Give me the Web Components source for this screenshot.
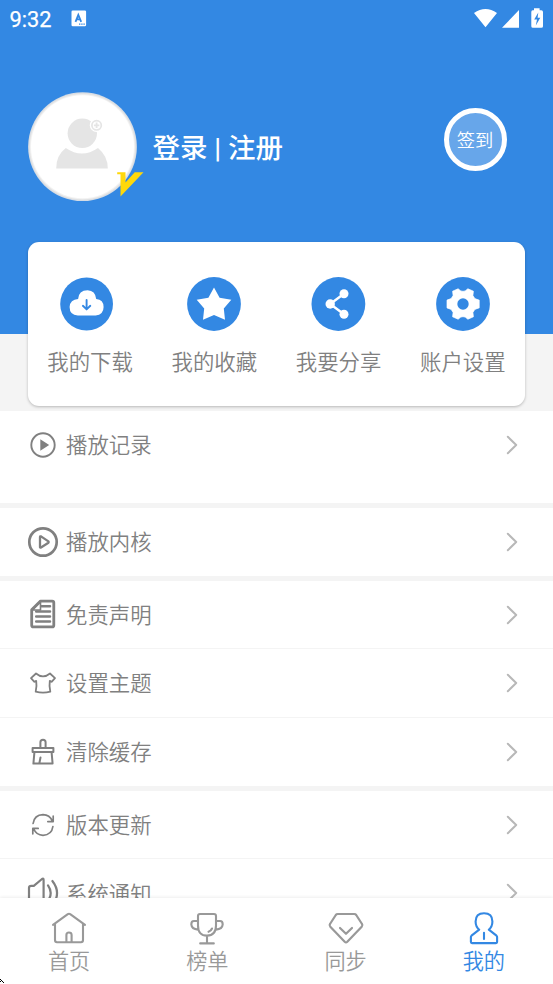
<!DOCTYPE html>
<html lang="zh-CN">
<head>
<meta charset="utf-8">
<title>我的</title>
<style>
html,body{margin:0;height:100%;overflow:hidden}
body{--blue:#3388e3;--gray:#808080;--line:#f4f4f4;font-family:"Noto Sans CJK SC",sans-serif;font-weight:350;color:var(--gray);background:#fff}
</style>
</head>
<body>
<profile-page></profile-page>
<script>
const ICONS = {
 play:`<circle r="11.7" stroke-width="1.9"/><path d="M-2.7-5.8V5.8L6.2 0Z" fill="currentColor" stroke="none"/>`,
 core:`<circle r="13.7" stroke-width="2.7"/><path d="M-3-5V5.2Q-2.8 6-2 5.5L5.4.7Q6 0 5.4-.6L-2-5.6Q-2.8-6-3-5Z" stroke-width="2.3"/>`,
 doc:`<path d="M-2.5-13.9H9.2Q10.8-13.9 10.8-12.3V10.2Q10.8 11.9 9.2 11.9H-9.6Q-11.3 11.9-11.3 10.2V-5.2Z" stroke-width="2.8"/><path d="M-2.5-13V-5H-10.5Z" stroke-width="1.6"/><path d="M-1.5-8.7H7M-6.8-3.6H7M-6.8 1.5H7M-6.8 6.5H7" stroke-width="2.5"/>`,
 shirt:`<path d="M-7-9.5-12-4.9-8.6-1.2-6.8-2.1Q-6 3-7.3 8.6Q0 10.6 7.3 8.6Q6 3 6.8-2.1L8.6-1.2 12-4.9 7-9.5Q0-3.7-7-9.5Z" stroke-width="1.8"/>`,
 brush:`<path d="M-2.6-4V-9.7Q-2.6-12.2 0-12.2T2.6-9.7V-4M-10.4-4H10.4V0H-10.4ZM-8.6.3-9.6 11.6H9.6L8.6.3M-2.5 5.5-3.7 11.5" stroke-width="2"/>`,
 refresh:`<path d="M-9.9-1.5Q-8.7-10 0-10.3Q6.8-10 9.2-4M10.2-8.8V-3.4H4.8M9.9 1.5Q8.7 10 0 10.3Q-6.8 10-9.2 4M-10.2 8.8V3.4H-4.8" stroke-width="1.7"/>`,
 speaker:`<path d="M-14 6V-5.2Q-14-7.2-11.7-7.2H-9.2L-1-14Q.6-15 .6-13V13Q.6 15-1 14L-9.2 7.4H-12.5Q-14 7.4-14 6M5-7.6Q10.4 0 5 7.6M9.4-12Q18.7 0 9.4 12" stroke-width="2.2"/>`,
 home:`<path d="M-16-3.2 -1.2-13.9Q0-14.7 1.2-13.9L16-3.2M-14-4.3V12Q-14 14.2-12 14.2H12Q14 14.2 14 12V-4.3M-2.6 14V7Q-2.6 4.5 0 4.5T2.6 7V14" stroke-width="2.1"/>`,
 trophy:`<path d="M-7-14H7Q9-14 9-12V-2.5Q9 7.6 0 7.6T-9-2.5V-12Q-9-14-7-14M-9.5-7H-13Q-15.7-7-15.7-3.6Q-15.3 1.2-9 1.6M9.5-7H13Q15.7-7 15.7-3.6Q15.3 1.2 9 1.6M0 8V15.5M-6.8 15.4H6.8M1.5 3.8Q4 3 5 .5" stroke-width="2.1"/>`,
 gem:`<path d="M-8.3-14H8.3Q9.5-14 10.2-13L16-4Q17-2.6 15.7-1.2L1.3 13.7Q0 14.9-1.3 13.7L-15.7-1.2Q-17-2.6-16-4L-10.2-13Q-9.5-14-8.3-14ZM-6 0 0 5.8 6 0" stroke-width="2.2"/>`,
 person:`<path d="M-4.8 1.7Q-8.4-1.4-8.4-6.5Q-8.4-14.8 0-14.8T8.4-6.5Q8.4-1.4 4.8 1.7L12.5 7.7Q13.1 8.2 13.1 9V14Q13.1 15.1 12 15.1H-12Q-13.1 15.1-13.1 14V9Q-13.1 8.2-12.5 7.7ZM0 4.8V11" stroke-width="2.1"/>`,
 arrow:`<path d="M-4.2-8.2 4.2 0-4.2 8.2" stroke-width="2"/>`,
 cloud:`<g transform="translate(-3.4 0)"><circle r="26.4" fill="var(--blue)" stroke="none"/><path d="M-8.8 11.5Q-17 11-17 3Q-16.5-4.6-8.5-5Q-8-13.5 1-13.7Q8.7-13.4 9.6-5Q17-4.3 17 3Q17 10.8 9 11.5Z" fill="#fff" stroke="none"/><path d="M0-4V4.5M-3.7 1.8 0 5.4 3.7 1.8" stroke="var(--blue)" stroke-width="1.9"/></g>`,
 star:`<circle r="26.9" fill="var(--blue)" stroke="none"/><path d="M0-16.5 5.6-6.2 17.3-4.2 9.8 4.4 11 15.8 0 11 -11 15.8-9.8 4.4-17.3-4.2-5.6-6.2Z" fill="#fff" stroke="none"/>`,
 share:`<g transform="translate(-.6 0)"><circle r="26.9" fill="var(--blue)" stroke="none"/><g fill="#fff" stroke="none"><circle cx="-8.2" r="4.7"/><circle cx="5.6" cy="-10.2" r="4.5"/><circle cx="5.6" cy="10.2" r="4.5"/></g><path d="M5.6-10.2-8.2 0 5.6 10.2" stroke="#fff" stroke-width="2.4"/></g>`,
 gear:`<circle r="26.9" fill="var(--blue)" stroke="none"/><path d="M16-3.9 11.8-5.4 9.9-8.6 10.4-12.8 4.9-15.2 2.2-13.1Q0-12.2-2.2-13.1L-4.9-15.2-10.4-12.8-9.9-8.6-11.8-5.4-16-3.9V3.9L-11.8 5.4-9.9 8.6-10.4 12.8-4.9 15.2-2.2 13.1Q0 12.2 2.2 13.1L4.9 15.2 10.4 12.8 9.9 8.6 11.8 5.4 16 3.9Z" fill="#fff" stroke="#fff" stroke-width=".7"/><circle r="5.7" fill="var(--blue)" stroke="none"/>`
};
function define(name, render){
  customElements.define(name, class extends HTMLElement{
    connectedCallback(){
      if(!this.shadowRoot) this.attachShadow({mode:'open'}).innerHTML = render(this);
    }
  });
}
define('line-icon', e => { const s=+e.getAttribute('size')||32; return `
<style>:host{display:block;flex:none;width:${s}px;height:${s}px}svg{display:block;overflow:visible}</style>
<svg width="${s}" height="${s}" viewBox="${-s/2} ${-s/2} ${s} ${s}" fill="none" stroke="currentColor" stroke-linecap="round" stroke-linejoin="round">${ICONS[e.getAttribute('name')]}</svg>`; });

define('status-bar', () => `
<style>:host{display:flex;align-items:center;height:37px;padding:0 8px 0 9.5px;color:#fff;font:400 21.8px/37px Roboto,sans-serif}
.time{margin-right:19.5px;padding-top:2px;-webkit-text-stroke:.25px #fff}svg{display:block}.sys{margin-left:auto;margin-top:-1px}</style>
<span class="time">9:32</span>
<svg width="16" height="17" viewBox="0 0 16 17"><rect x=".5" y=".5" width="14.6" height="15.8" rx="1.3" fill="#fff"/><path d="M4.5 11.8 7.3 4.8 10.2 11.8M5.6 9.4H9" fill="none" stroke="#3388e3" stroke-width="1.8"/><path d="M8 14.2H14" stroke="#3388e3" stroke-width="1.3" stroke-dasharray="1.4 .8"/></svg>
<svg class="sys" width="72" height="22" viewBox="473 7 72 22" fill="#fff"><path d="M474 13Q485.5 5.2 497 13L485.5 27.2ZM502 27.8 519 10V27.8ZM532.7 10.3H534V8.2H539.6V10.3H541.3Q543 10.3 543 12V26.2Q543 27.8 541.3 27.8H533Q531.3 27.8 531.3 26.2V12Q531.3 10.3 532.7 10.3Z"/><path d="M538.3 12.5 534.2 19.5H537L535.8 25.4 540.3 17.8H537.6Z" fill="#3388e3"/></svg>`);

define('user-avatar', () => `
<style>:host{display:block;position:relative;width:110px;height:110px}svg{display:block}.v{position:absolute;left:89px;top:80px}</style>
<svg width="110" height="110" viewBox="0 0 110 110"><circle cx="54.5" cy="54.7" r="54.4" fill="#d5dce5"/><circle cx="54.5" cy="54.7" r="53.4" fill="#e4e4e4"/><circle cx="54.5" cy="54.7" r="52.5" fill="#f2f2f2"/><circle cx="54.5" cy="54.7" r="51.5" fill="#fff"/>
<circle cx="54.3" cy="41.3" r="14.7" fill="#e5e5e5"/><path d="M28.2 76.5Q28 63.5 37.8 56Q54 67 70 56Q79.8 64 79.8 76.5Z" fill="#e5e5e5"/>
<circle cx="68.6" cy="33.3" r="6.8" fill="#fff"/><circle cx="68.6" cy="33.3" r="4.7" fill="#fff" stroke="#e5e5e5" stroke-width="1.7"/><path d="M68.6 30.6V36M65.9 33.3H71.3" stroke="#e5e5e5" stroke-width="1.8"/></svg>
<svg class="v" width="28" height="26" viewBox="0 0 28 26"><path d="M.2.2H8.5V10.5L17.7.2H26.5L3.5 24.6V2.3H.2Z" fill="#ffd80a"/></svg>`);

define('sign-button', () => `
<style>:host{display:flex;align-items:center;justify-content:center;box-sizing:border-box;width:63px;height:63px;padding:0 1px 1px 0;border:5px solid #fff;border-radius:50%;background:#67a6ea;color:#fff;font-size:18.3px;line-height:26px}</style><slot></slot>`);

define('profile-header', () => `
<style>:host{display:block;height:334px;background:var(--blue);color:#fff}
.user{display:flex;align-items:center;padding:55px 46px 0 28px}
.name{margin:4px 0 0 14.5px;font-family:Roboto,"Noto Sans CJK SC",sans-serif;font-size:27.5px;font-weight:500;line-height:40px;white-space:pre}
sign-button{margin:-16px 0 0 auto}</style>
<status-bar></status-bar>
<div class="user"><user-avatar></user-avatar><div class="name"><slot></slot></div><sign-button>签到</sign-button></div>`);

define('quick-action', e => `
<style>:host{display:flex;flex:1;flex-direction:column;align-items:center;gap:14px;font-size:21.4px;line-height:32px;white-space:nowrap}</style>
<line-icon name="${e.getAttribute('icon')}" size="54"></line-icon><slot></slot>`);

define('action-card', () => `
<style>:host{display:flex;box-sizing:border-box;height:164px;margin:-92px 28px 5px;padding:34.6px 0 0;border-radius:11px;background:#fff;box-shadow:0 1px 3px rgba(0,0,0,.25);position:relative}</style><slot></slot>`);

define('menu-group', () => `
<style>:host{display:block;flex:none;background:#fff;border-bottom:5px solid var(--line)}
::slotted(menu-row:not(:only-child)){height:68.33px}
::slotted(menu-row:not(:last-child)){border-bottom:1px solid var(--line)}</style><slot></slot>`);

define('menu-row', e => `
<style>:host{display:flex;box-sizing:border-box;align-items:center;height:68px;padding:0 25px 0 27px;font-size:21.4px;line-height:32px}
.label{margin:-1.5px 0 0 7px}.arrow{margin-left:auto;color:#b8b8b8}</style>
<line-icon name="${e.getAttribute('icon')}"></line-icon><span class="label"><slot></slot></span><line-icon class="arrow" name="arrow" size="32"></line-icon>`);

define('tab-item', e => `
<style>:host{display:flex;flex:1;flex-direction:column;align-items:center;padding-top:12px;color:#999;font-size:21.2px;line-height:27px}:host([active]){color:var(--blue)}</style>
<line-icon name="${e.getAttribute('icon')}" size="36"></line-icon><slot></slot>`);

define('tab-bar', () => `
<style>:host{display:flex;flex:none;position:relative;height:86px;background:#fff;box-shadow:0 -1px 3px rgba(0,0,0,.07)}
svg{position:absolute;left:0;bottom:0}</style><slot></slot>
<svg width="5" height="5" viewBox="0 0 5 5" shape-rendering="crispEdges"><path d="M0 0H1V1H0ZM1 1H2V2H1ZM3 3H4V4H3ZM0 2H1V3H0ZM2 2H3V3H2Z"/></svg>`);

define('profile-page', () => `
<style>:host{display:flex;flex-direction:column;height:984px;overflow:hidden}
main{flex:1;min-height:0;overflow:hidden;background:var(--line)}
.tall{height:92px}</style>
<main>
<profile-header>登录 | 注册</profile-header>
<action-card><quick-action icon="cloud">我的下载</quick-action><quick-action icon="star">我的收藏</quick-action><quick-action icon="share">我要分享</quick-action><quick-action icon="gear">账户设置</quick-action></action-card>
<menu-group class="tall"><menu-row icon="play">播放记录</menu-row></menu-group>
<menu-group><menu-row icon="core">播放内核</menu-row></menu-group>
<menu-group><menu-row icon="doc">免责声明</menu-row><menu-row icon="shirt">设置主题</menu-row><menu-row icon="brush">清除缓存</menu-row></menu-group>
<menu-group><menu-row icon="refresh">版本更新</menu-row><menu-row icon="speaker">系统通知</menu-row></menu-group>
</main>
<tab-bar><tab-item icon="home">首页</tab-item><tab-item icon="trophy">榜单</tab-item><tab-item icon="gem">同步</tab-item><tab-item icon="person" active>我的</tab-item></tab-bar>`);
</script>
</body>
</html>
